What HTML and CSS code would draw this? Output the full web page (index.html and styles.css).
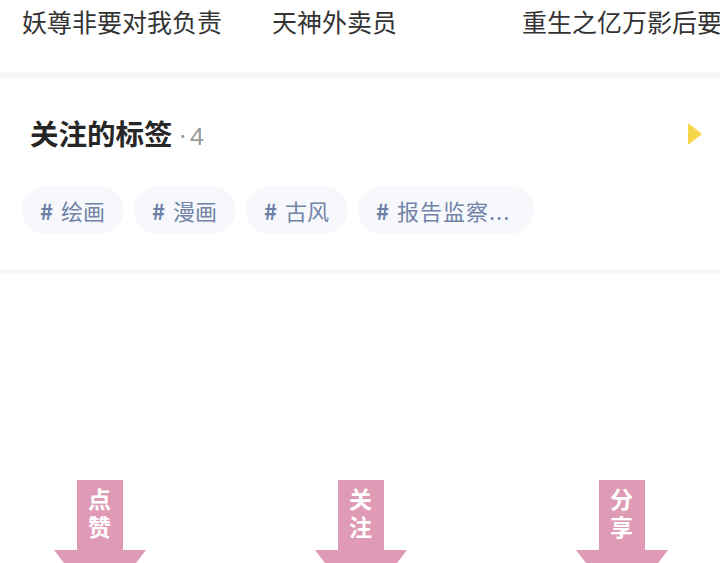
FILE: index.html
```html
<!DOCTYPE html>
<html lang="zh-CN">
<head>
<meta charset="UTF-8">
<title>关注的标签</title>
<link rel="stylesheet" href="styles.css">
</head>
<body>

<!-- book titles -->
<div class="titles">
  <div class="title">妖尊非要对我负责</div>
  <div class="title">天神外卖员</div>
  <div class="title">重生之亿万影后要火了</div>
</div>

<div class="divider"></div>

<!-- followed tags -->
<div class="tags-section">
  <div class="tags-head">
    <h2>关注的标签<span class="count"><i>·</i>4</span></h2>
    <span class="more"></span>
  </div>
  <div class="tags">
    <a href="#" class="tag"><b>#</b>绘画</a>
    <a href="#" class="tag"><b>#</b>漫画</a>
    <a href="#" class="tag"><b>#</b>古风</a>
    <a href="#" class="tag long"><b>#</b>报告监察...</a>
  </div>
</div>

<div class="divider thin"></div>

<!-- arrows -->
<div class="arrows">
  <div class="arrow"><div class="stem"><span>点</span><span>赞</span></div><div class="head"></div></div>
  <div class="arrow"><div class="stem"><span>关</span><span>注</span></div><div class="head"></div></div>
  <div class="arrow"><div class="stem"><span>分</span><span>享</span></div><div class="head"></div></div>
</div>

</body>
</html>
```

FILE: styles.css
```css
*{box-sizing:border-box;margin:0;padding:0}
html,body{height:100%}
body{font-family:"Noto Sans CJK SC","Noto Sans",sans-serif;background:#fff;color:#333;overflow:hidden}

/* ---------- titles ---------- */
.titles{display:grid;grid-template-columns:250px 250px 250px;padding:3px 0 0 22px;height:72px;overflow:hidden}
.title{font-size:25px;line-height:36px;white-space:nowrap;overflow:hidden;color:#333}

.divider{height:6px;background:#f7f7f7}
.divider.thin{height:5px}

/* ---------- tags ---------- */
.tags-section{padding:36px 18px 35px 22px}
.tags-head{display:flex;align-items:center;justify-content:space-between;height:40px;padding-left:8px}
.tags-head h2{font-size:28.5px;font-weight:700;color:#262626;line-height:40px}
.tags-head .count{font-family:"Noto Sans",sans-serif;font-size:24px;font-weight:400;color:#9a9a9a;margin-left:7px}
.tags-head .count i{font-style:normal;margin-right:4px}
.more{width:0;height:0;border-left:14px solid #f7d64c;border-top:11px solid transparent;border-bottom:11px solid transparent;margin-top:-1px}
.tags{display:flex;gap:10px;margin-top:32px}
.tag{display:flex;align-items:center;height:48px;padding:0 19px 0 18px;border-radius:24px;background:#f6f8fb;
  color:#7183a8;font-size:22px;text-decoration:none}
.tag.long{padding-right:24px;letter-spacing:1px}
.tag b{font-weight:700;font-size:22px;color:#6b7ea5;margin-right:8px;letter-spacing:0}

/* ---------- arrows ---------- */
.arrows{display:flex;gap:168px;padding-left:53px;margin-top:206px;height:83px;overflow:hidden}
.arrow{width:93px;display:flex;flex-direction:column;align-items:center}
.stem{flex:none;width:46px;height:70px;background:#df9bb6;color:#fff;font-size:23px;font-weight:700;
  display:flex;flex-direction:column;align-items:center;padding-top:6px;gap:4px}
.stem span{display:block;height:24px;line-height:24px}
.head{flex:none;width:0;height:0;border-left:46px solid transparent;border-right:46px solid transparent;border-top:60px solid #df9bb6}
```
